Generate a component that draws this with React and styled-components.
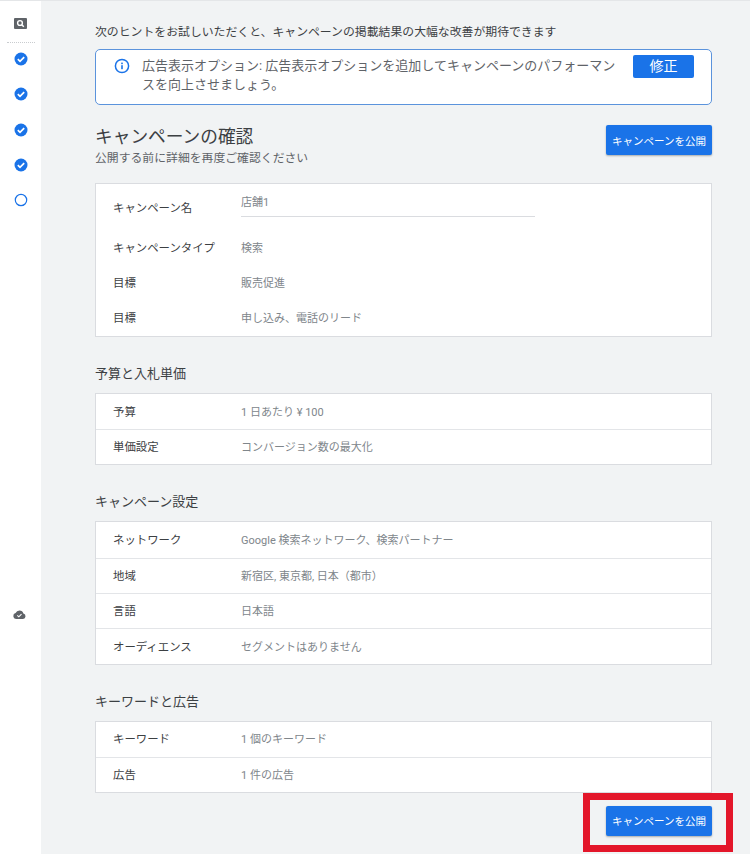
import React from "react";
import styled, { createGlobalStyle } from "styled-components";

const GlobalStyle = createGlobalStyle`
  html, body {
    margin: 0;
    padding: 0;
    height: 100%;
    overflow: hidden;
    background: #f1f3f4;
    font-family: Roboto, "Noto Sans CJK JP", sans-serif;
  }
`;

const sections = [
  {
    title: "予算と入札単価",
    rows: [
      ["予算", "1 日あたり ¥ 100"],
      ["単価設定", "コンバージョン数の最大化"],
    ],
  },
  {
    title: "キャンペーン設定",
    rows: [
      ["ネットワーク", "Google 検索ネットワーク、検索パートナー"],
      ["地域", "新宿区, 東京都, 日本（都市）"],
      ["言語", "日本語"],
      ["オーディエンス", "セグメントはありません"],
    ],
  },
  {
    title: "キーワードと広告",
    rows: [
      ["キーワード", "1 個のキーワード"],
      ["広告", "1 件の広告"],
    ],
  },
];

const CheckStep = () => (
  <svg width="14" height="14" viewBox="0 0 14 14">
    <circle cx="7" cy="7" r="6.5" fill="#1a73e8" />
    <path d="M3.8 7.2l2.2 2.1 4.2-4.2" fill="none" stroke="#fff" strokeWidth="1.7" />
  </svg>
);

const OpenStep = () => (
  <svg width="14" height="14" viewBox="0 0 14 14">
    <circle cx="7" cy="7" r="5.7" fill="#fff" stroke="#1a73e8" strokeWidth="1.2" />
  </svg>
);

const SearchBadge = () => (
  <svg width="13" height="11" viewBox="0 0 13 11">
    <rect width="13" height="11" rx="1" fill="#5f6368" />
    <circle cx="6" cy="5" r="2.4" fill="none" stroke="#fff" strokeWidth="1.4" />
    <path d="M7.8 6.8l2 2" stroke="#fff" strokeWidth="1.5" />
  </svg>
);

const CloudDone = () => (
  <svg width="13" height="10" viewBox="0 0 13 10">
    <path
      d="M3 10a3 3 0 0 1-.4-5.9A4.2 4.2 0 0 1 6.5 1.500a4 4 0 0 1 3.900 3A2.800 2.800 0 0 1 10 10z"
      fill="#5f6368"
    />
    <path d="M4.300 6.400l1.500 1.400 2.700-2.700" fill="none" stroke="#fff" strokeWidth="1.100" />
  </svg>
);

const InfoIcon = () => (
  <svg width="16" height="16" viewBox="0 0 16 16">
    <circle cx="8" cy="8" r="6.6" fill="none" stroke="#1a73e8" strokeWidth="1.5" />
    <rect x="7.200" y="7.200" width="1.600" height="4" fill="#1a73e8" />
    <rect x="7.200" y="4.600" width="1.600" height="1.600" fill="#1a73e8" />
  </svg>
);

const App = () => {
  return (
    <>
      <GlobalStyle />
      <Page>
        <Sidebar>
          <SearchSlot>
            <SearchBadge />
          </SearchSlot>
          <Dots />
          <Steps>
            <CheckStep />
            <CheckStep />
            <CheckStep />
            <CheckStep />
            <OpenStep />
          </Steps>
          <CloudSlot>
            <CloudDone />
          </CloudSlot>
        </Sidebar>
        <Main>
          <Intro>次のヒントをお試しいただくと、キャンペーンの掲載結果の大幅な改善が期待できます</Intro>
          <Alert>
            <AlertIcon>
              <InfoIcon />
            </AlertIcon>
            <AlertText>
              広告表示オプション: 広告表示オプションを追加してキャンペーンのパフォーマンスを向上させましょう。
            </AlertText>
            <FixButton>修正</FixButton>
          </Alert>
          <ReviewHeader>
            <div>
              <Title>キャンペーンの確認</Title>
              <Subtitle>公開する前に詳細を再度ご確認ください</Subtitle>
            </div>
            <PublishButton>キャンペーンを公開</PublishButton>
          </ReviewHeader>
          <SummaryCard>
            <NameRow>
              <NameLabel>キャンペーン名</NameLabel>
              <NameValue>店舗1</NameValue>
            </NameRow>
            <PlainRow>
              <Label>キャンペーンタイプ</Label>
              <Value>検索</Value>
            </PlainRow>
            <PlainRow>
              <Label>目標</Label>
              <Value>販売促進</Value>
            </PlainRow>
            <PlainRow>
              <Label>目標</Label>
              <Value>申し込み、電話のリード</Value>
            </PlainRow>
          </SummaryCard>
          {sections.map((section) => (
            <Section key={section.title}>
              <SectionTitle>{section.title}</SectionTitle>
              <Card>
                {section.rows.map(([label, value]) => (
                  <Row key={label}>
                    <Label>{label}</Label>
                    <Value>{value}</Value>
                  </Row>
                ))}
              </Card>
            </Section>
          ))}
          <Footer>
            <Highlighted>
              <PublishButton>キャンペーンを公開</PublishButton>
            </Highlighted>
          </Footer>
        </Main>
      </Page>
    </>
  );
};

const Page = styled.div`
  display: flex;
  width: 750px;
  height: 854px;
  overflow: hidden;
  border-top: 1px solid #e4e6e8;
  box-sizing: border-box;
`;

const Sidebar = styled.aside`
  width: 41px;
  flex-shrink: 0;
  background: #fff;
  display: flex;
  flex-direction: column;
  align-items: center;
`;

const SearchSlot = styled.div`
  height: 11px;
  margin-top: 17px;
  line-height: 0;
`;

const Dots = styled.div`
  width: 28px;
  margin-top: 13px;
  border-top: 1px dotted #c9cccf;
`;

const Steps = styled.div`
  display: flex;
  flex-direction: column;
  gap: 21.300px;
  margin-top: 9px;
  svg {
    display: block;
  }
`;

const CloudSlot = styled.div`
  margin-top: 402px;
  margin-left: -3px;
  line-height: 0;
`;

const Main = styled.main`
  flex: 1;
  padding: 23px 38px 0 54px;
  min-width: 0;
`;

const Intro = styled.p`
  margin: 0;
  font-size: 11.870px;
  line-height: 17px;
  color: #3c4043;
`;

const Alert = styled.div`
  display: flex;
  align-items: flex-start;
  height: 56px;
  margin-top: 8px;
  box-sizing: border-box;
  background: #fff;
  border: 1px solid #5b93dc;
  border-radius: 5px;
  padding: 5px 17px 0 18px;
`;

const AlertIcon = styled.div`
  width: 28px;
  flex-shrink: 0;
  padding-top: 3px;
  line-height: 0;
`;

const AlertText = styled.div`
  flex: 1;
  font-size: 13px;
  line-height: 19px;
  color: #5f6368;
  margin-top: 1px;
`;

const FixButton = styled.button`
  width: 61px;
  height: 23px;
  flex-shrink: 0;
  margin-left: 15px;
  padding: 0 0 3px;
  border: 0;
  border-radius: 2px;
  background: #1a73e8;
  color: #fff;
  font: 400 14px Roboto, "Noto Sans CJK JP", sans-serif;
`;

const ReviewHeader = styled.div`
  display: flex;
  justify-content: space-between;
  align-items: flex-start;
  margin-top: 20px;
`;

const Title = styled.h1`
  margin: 0;
  padding-top: 1px;
  font-size: 17.700px;
  line-height: 22px;
  font-weight: 400;
  color: #3c4043;
`;

const Subtitle = styled.div`
  margin-top: 2px;
  font-size: 11.850px;
  line-height: 17px;
  color: #5f6368;
`;

const PublishButton = styled.button`
  display: block;
  width: 106px;
  height: 30px;
  padding: 0;
  border: 0;
  border-radius: 2px;
  background: #1a73e8;
  color: #fff;
  font: 400 10.500px Roboto, "Noto Sans CJK JP", sans-serif;
  box-shadow: 0 1px 2px rgba(60, 64, 67, 0.4);
`;

const Card = styled.div`
  background: #fff;
  border: 1px solid #dadce0;
  box-sizing: border-box;
`;

const SummaryCard = styled(Card)`
  margin-top: 16px;
`;

const RowBase = styled.div`
  display: grid;
  grid-template-columns: 128px 1fr;
  align-items: center;
  box-sizing: border-box;
  height: 35.300px;
  padding: 1px 0 0 17px;
`;

const Row = styled(RowBase)`
  & + & {
    border-top: 1px solid #e3e5e8;
  }
`;

const PlainRow = styled(RowBase)``;

const NameRow = styled(RowBase)`
  height: 46px;
  padding-top: 0;
  align-items: start;
`;

const Label = styled.span`
  font-size: 11.400px;
  line-height: 17px;
  color: #3c4043;
  align-self: center;
`;

const NameLabel = styled(Label)`
  padding-top: 2px;
`;

const Value = styled.span`
  font-size: 11px;
  line-height: 17px;
  color: #80868b;
`;

const NameValue = styled(Value)`
  display: block;
  width: 294px;
  height: 33px;
  padding-top: 10px;
  box-sizing: border-box;
  border-bottom: 1px solid #dadce0;
`;

const Section = styled.section`
  margin-top: 27px;
`;

const SectionTitle = styled.h2`
  margin: 0 0 10px;
  font-size: 13px;
  line-height: 19px;
  font-weight: 400;
  color: #3c4043;
`;

const Footer = styled.div`
  display: flex;
  justify-content: flex-end;
  margin-top: 12.500px;
`;

const Highlighted = styled.div`
  position: relative;
  &::after {
    content: "";
    position: absolute;
    left: -23px;
    right: -21px;
    top: -13px;
    bottom: -16px;
    border: 7px solid #e3162a;
    pointer-events: none;
  }
`;

export default App;
